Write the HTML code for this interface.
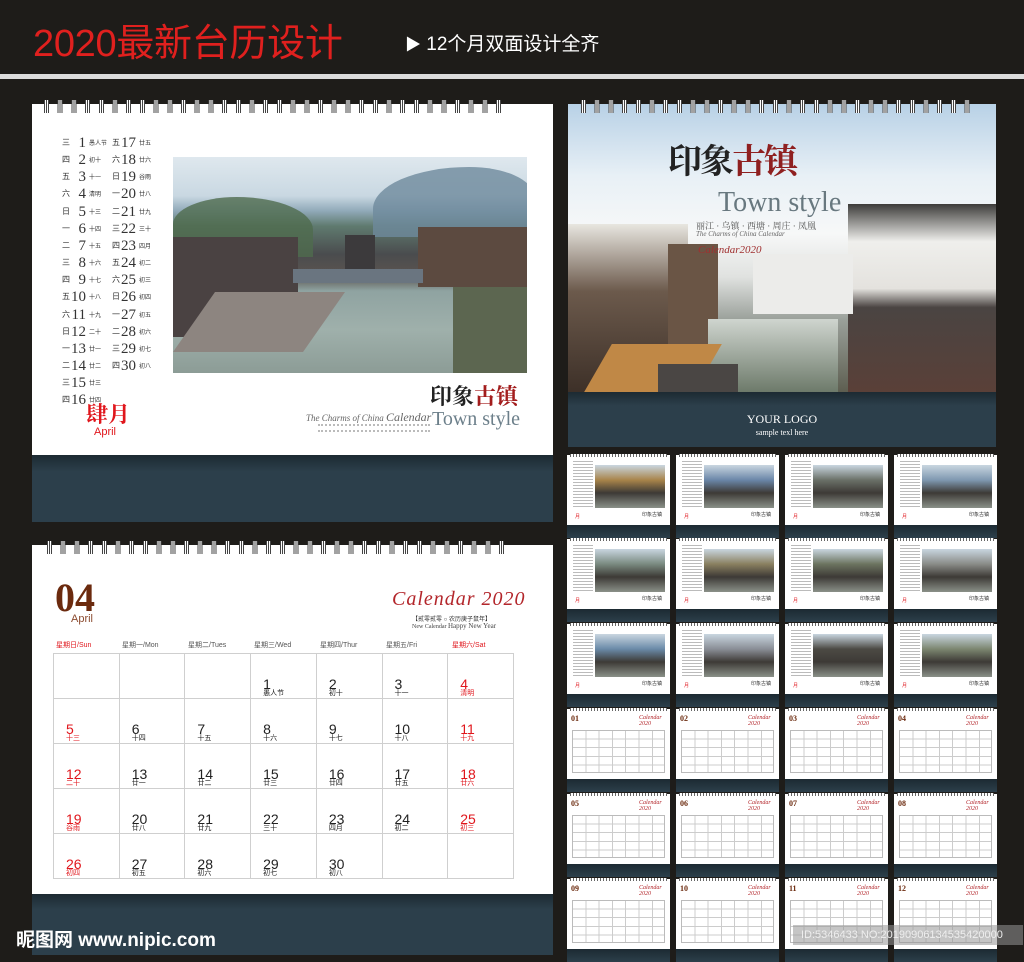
<!DOCTYPE html>
<html><head><meta charset="utf-8">
<style>
*{margin:0;padding:0;box-sizing:border-box}
body{width:1024px;height:955px;background:#1e1c19;position:relative;overflow:hidden;font-family:"Liberation Sans","Noto Sans CJK SC",sans-serif}
.abs{position:absolute}
.spiral{position:absolute;height:13px;background:repeating-linear-gradient(90deg,transparent 0,transparent 1px,#444 1px,#444 2px,#fff 2px,#fff 3px,#444 3px,#444 4px,#fff 4px,#fff 5px,#444 5px,#444 6px,transparent 6px,transparent 13.7px)}
.band{position:absolute;background:linear-gradient(#1c2a32,#2c3f4b 25%,#2c3f4b)}
.photo{position:absolute;overflow:hidden}
.ser{font-family:"Liberation Serif","Noto Serif CJK SC",serif}
.red{color:#e0161c}
.list div{position:absolute;height:16px;font-size:8px;color:#333;white-space:nowrap}
.list b{display:inline-block;font-family:"Liberation Serif",serif;font-size:15px;font-weight:normal;width:16px;text-align:right;margin-right:3px;vertical-align:-2px}
.list i{font-style:normal;font-size:6px}
.grid{position:absolute;border-collapse:collapse}
.grid td{border:1px solid #cfcfcf;width:66px;height:45px;vertical-align:top;padding:24px 0 0 12px;font-size:14px;line-height:12px;color:#222}
.grid td span{display:block;font-size:7px;line-height:8px}
.grid td.r{color:#e0161c}
.th{position:absolute;background:#fff;width:103px;height:70px}
.tb{position:absolute;width:103px;height:13px;background:linear-gradient(#1c2a32,#2c3f4b)}
</style></head><body>

<div class="abs" style="left:33px;top:22px;font-size:38px;color:#e0201e;letter-spacing:-0.3px;line-height:44px">2020最新台历设计</div>
<div class="abs" style="left:405px;top:33px;font-size:19px;color:#fff;line-height:24px"><span style="font-size:16px">▶</span> 12个月双面设计全齐</div>
<div class="abs" style="left:0;top:74px;width:1024px;height:5px;background:#dcdcdc"></div>

<!-- top-left calendar -->
<div class="abs" style="left:32px;top:104px;width:521px;height:351px;background:#fff"></div>
<div class="spiral" style="left:43px;top:100px;width:460px"></div>
<div class="band" style="left:32px;top:455px;width:521px;height:67px"></div>
<div class="list" id="list"></div>
<div class="abs ser red" style="left:86px;top:403px;font-size:22px;font-weight:bold;line-height:24px">肆月</div>
<div class="abs red" style="left:94px;top:427px;font-size:11px;line-height:11px">April</div>
<div class="photo" style="left:173px;top:157px;width:354px;height:216px;background:linear-gradient(180deg,#dfe8ee 0%,#c9d8e2 18%,#90a9b8 25%,#5f7a6f 32%,#4a4c4e 45%,#5b5450 55%,#8fa3a1 62%,#9fb0ab 80%,#8c9c96 100%)">
 <div class="abs" style="left:0;top:40px;width:140px;height:60px;background:#4f6b4e;border-radius:50% 60% 0 0;opacity:.8"></div>
 <div class="abs" style="left:200px;top:10px;width:160px;height:70px;background:#6e8a9c;border-radius:60% 40% 0 0;opacity:.8"></div>
 <div class="abs" style="left:0;top:80px;width:125px;height:100px;background:#4a4242"></div>
 <div class="abs" style="left:245px;top:70px;width:110px;height:60px;background:#5c4a40"></div>
 <div class="abs" style="left:120px;top:112px;width:130px;height:14px;background:#6a7580"></div>
 <div class="abs" style="left:172px;top:78px;width:30px;height:34px;background:#3c3a3c"></div>
 <div class="abs" style="left:0;top:135px;width:130px;height:60px;background:#8d8580;transform:skewX(-35deg);transform-origin:bottom left"></div>
 <div class="abs" style="left:280px;top:130px;width:80px;height:86px;background:#5c6650"></div>
</div>
<div class="abs" style="left:430px;top:382px;font-size:22px;font-family:'Noto Serif CJK SC',serif;font-weight:bold;line-height:28px"><span style="color:#222">印象</span><span style="color:#a31d1d">古镇</span></div>
<div class="abs ser" style="left:432px;top:408px;font-size:20px;color:#6c7f8a;line-height:22px">Town style</div>
<div class="abs ser" style="left:306px;top:410px;font-size:9px;font-style:italic;color:#666">The Charms of China <span style="font-size:12px">Calendar</span></div>
<div class="abs" style="left:318px;top:424px;width:112px;height:8px;border-top:2px dotted #bbb;border-bottom:2px dotted #bbb"></div>

<!-- top-right -->
<div class="photo" style="left:568px;top:104px;width:428px;height:288px;background:linear-gradient(180deg,#b8d1e6 0%,#e8f0f6 25%,#f7f8f8 45%,#e0e2e0 60%,#9aa09a 75%,#5d5e50 100%)">
 <div class="abs" style="left:0;top:120px;width:120px;height:168px;background:linear-gradient(#e8e6e0,#6c5a4c 40%,#3d3028)"></div>
 <div class="abs" style="left:100px;top:140px;width:50px;height:120px;background:#6a5545"></div>
 <div class="abs" style="left:280px;top:100px;width:148px;height:188px;background:linear-gradient(#3d3c3a,#efefec 20%,#e4e2de 45%,#4a4442 55%,#5a4038)"></div>
 <div class="abs" style="left:185px;top:150px;width:100px;height:60px;background:#ececea"></div>
 <div class="abs" style="left:140px;top:215px;width:130px;height:73px;background:linear-gradient(#cfd5cf,#6d7a6a)"></div>
 <div class="abs" style="left:30px;top:240px;width:110px;height:48px;background:#c08846;transform:skewX(-30deg)"></div>
 <div class="abs" style="left:90px;top:260px;width:80px;height:28px;background:#4a4644"></div>
 <div class="abs" style="left:100px;top:30px;font-size:34px;font-family:'Noto Serif CJK SC',serif;font-weight:bold;letter-spacing:-2px"><span style="color:#222">印象</span><span style="color:#8f2020">古镇</span></div>
 <div class="abs ser" style="left:150px;top:83px;font-size:28px;color:#68787f">Town style</div>
 <div class="abs ser" style="left:128px;top:115px;font-size:9px;color:#555">丽江 · 乌镇 · 西塘 · 周庄 · 凤凰</div>
 <div class="abs ser" style="left:128px;top:126px;font-size:7px;font-style:italic;color:#666">The Charms of China Calendar</div>
 <div class="abs ser" style="left:130px;top:140px;font-size:11px;font-style:italic;color:#a03030">Calendar2020</div>
</div>
<div class="spiral" style="left:580px;top:100px;width:395px"></div>
<div class="band" style="left:568px;top:392px;width:428px;height:55px"></div>
<div class="abs ser" style="left:568px;top:413px;width:428px;text-align:center;font-size:12px;color:#fff;line-height:12px">YOUR LOGO<br><span style="font-size:8px">sample texl here</span></div>

<!-- bottom-left -->
<div class="abs" style="left:32px;top:545px;width:521px;height:349px;background:#fff"></div>
<div class="spiral" style="left:46px;top:541px;width:460px"></div>
<div class="band" style="left:32px;top:894px;width:521px;height:61px"></div>
<div class="abs ser" style="left:55px;top:578px;font-size:40px;font-weight:bold;color:#6b2a0e;line-height:40px">04</div>
<div class="abs" style="left:71px;top:613px;font-size:11px;color:#8b4a2e">April</div>
<div class="abs ser" style="left:392px;top:588px;font-size:20px;font-style:italic;color:#b3262b;letter-spacing:1px">Calendar 2020</div>
<div class="abs" style="left:412px;top:614px;font-size:6px;color:#333">【贰零贰零 ○ 农历庚子鼠年】</div>
<div class="abs ser" style="left:412px;top:622px;font-size:6px;color:#444">New Calendar <span style="font-size:7px">Happy New Year</span></div>
<div id="hdr"></div>
<table class="grid" id="grid" style="left:53px;top:653px;width:461px"></table>
<div class="abs" style="left:16px;top:925px;font-size:19px;font-weight:bold;color:#fff">昵图网 www.nipic.com</div>

<div id="thumbs"></div>
<div class="abs" style="left:793px;top:925px;width:230px;height:20px;background:rgba(150,150,150,.55);color:#eee;font-size:11px;line-height:20px;padding-left:8px;white-space:nowrap;overflow:hidden">ID:5346433 NO:20190906134535420000</div>

<script>
var wk=['三','四','五','六','日','一','二'];
var lun=['愚人节','初十','十一','清明','十三','十四','十五','十六','十七','十八','十九','二十','廿一','廿二','廿三','廿四','廿五','廿六','谷雨','廿八','廿九','三十','四月','初二','初三','初四','初五','初六','初七','初八'];
var h='';
for(var d=1;d<=30;d++){var c=d<=16?0:1,r=c?d-17:d-1;var w=wk[(d-1)%7];var red=(w=='六'||w=='日');
h+='<div class="'+(red?'red':'')+'" style="left:'+(c?112:62)+'px;top:'+(135+r*17.15)+'px">'+w+'<b>'+d+'</b><i>'+lun[d-1]+'</i></div>';}
document.getElementById('list').innerHTML=h;
var hd=['星期日/Sun','星期一/Mon','星期二/Tues','星期三/Wed','星期四/Thur','星期五/Fri','星期六/Sat'],hh='';
for(var i=0;i<7;i++)hh+='<div class="abs" style="left:'+(56+i*66)+'px;top:640px;font-size:7px;color:'+((i==0||i==6)?'#e0161c':'#555')+'">'+hd[i]+'</div>';
document.getElementById('hdr').innerHTML=hh;
var g='';
for(var r=0;r<5;r++){g+='<tr>';for(var c=0;c<7;c++){var d=r*7+c-2;var cls=(c==0||c==6)?' class="r"':'';
if(d>=1&&d<=30)g+='<td'+cls+'>'+d+'<span>'+lun[d-1]+'</span></td>';else g+='<td></td>';}g+='</tr>';}
document.getElementById('grid').innerHTML=g;
var xs=[567,676,785,894],ys=[455,539,624,709,794,879],cols=['#a8844a','#6a86a8','#6a7068','#7f98b0','#7a8a80','#8a8060','#6c7460','#8a8c88','#6a8aa8','#8a8e96','#4c4a44','#7c8670'],T='';
for(var r=0;r<6;r++)for(var c=0;c<4;c++){var x=xs[c],y=ys[r],n=r*4+c;
T+='<div class="th" style="left:'+x+'px;top:'+y+'px"><div class="spiral" style="left:3px;top:-1px;width:97px;height:3px;background:repeating-linear-gradient(90deg,#666 0,#666 1px,#fff 1px,#fff 3px)"></div>';
if(r<3){T+='<div class="abs" style="left:28px;top:10px;width:70px;height:43px;background:linear-gradient(#c9d6e0,'+cols[n]+' 35%,#3d3a36 65%,#8a9088)"></div>';
T+='<div class="abs" style="left:6px;top:6px;width:20px;height:46px;background:repeating-linear-gradient(#bbb 0,#bbb 1px,transparent 1px,transparent 3px)"></div>';
T+='<div class="abs" style="left:8px;top:58px;font-size:5px;color:#e0161c">月</div><div class="abs" style="left:75px;top:56px;font-size:5px;color:#333">印象古镇</div>';}
else{var m=n-11;T+='<div class="abs ser" style="left:4px;top:5px;font-size:8px;font-weight:bold;color:#6b2a0e">'+(m<10?'0'+m:m)+'</div><div class="abs ser" style="left:72px;top:6px;font-size:6px;font-style:italic;color:#b3262b">Calendar 2020</div>';
T+='<div class="abs" style="left:5px;top:21px;width:93px;height:43px;border:1px solid #bbb;background:repeating-linear-gradient(90deg,transparent 0,transparent 12.3px,#ccc 12.3px,#ccc 13.3px),repeating-linear-gradient(transparent 0,transparent 7.6px,#ccc 7.6px,#ccc 8.6px)"></div>';}
T+='</div><div class="tb" style="left:'+x+'px;top:'+(y+70)+'px"></div>';}
document.getElementById('thumbs').innerHTML=T;
</script>
</body></html>
